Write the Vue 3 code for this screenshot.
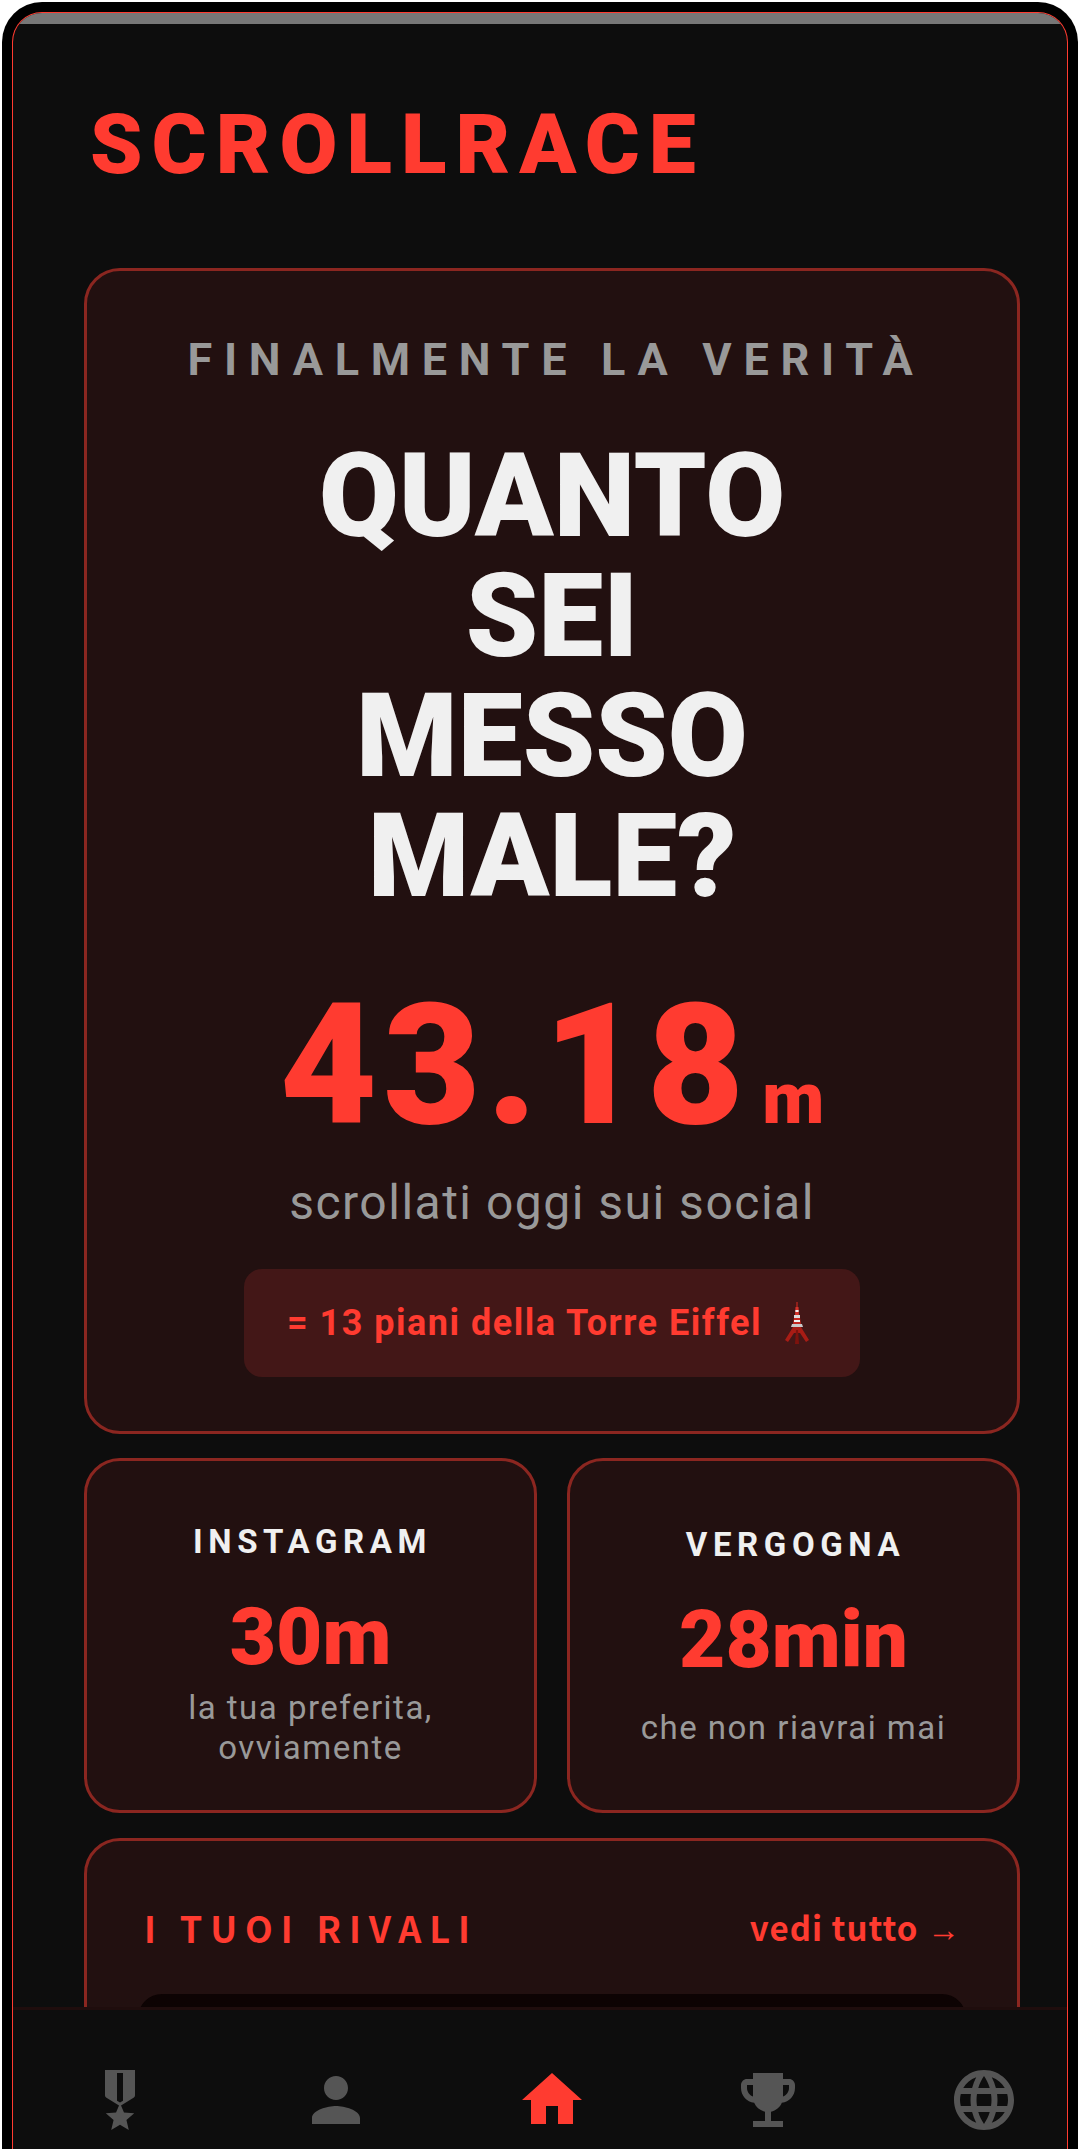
<template>
  <div class="device">
    <div class="screen">
      <div class="status-bar"></div>

      <div class="scroll-area">
        <h1 class="logo">SCROLLRACE</h1>

        <section class="card hero">
          <p class="hero-kicker">FINALMENTE LA VERITÀ</p>
          <h2 class="hero-title">QUANTO<br />SEI<br />MESSO<br />MALE?</h2>
          <div class="hero-value">43.18<span class="hero-unit">m</span></div>
          <p class="hero-sub">scrollati oggi sui social</p>
          <div class="hero-pill">
            <span>= 13 piani della Torre Eiffel</span>
            <svg class="tower" viewBox="0 0 24 42">
              <path fill="#a81c15" d="M8 25h8l8 13-3 2-6-9H9l-6 9-3-2z" />
              <path fill="#7d120d" d="M11 28h2l1 14h-4z" />
              <path fill="#c9c9c9" d="M7 22h10l1 3H6z" />
              <path fill="#c4271f" d="M9 16h6l1 6H8z" />
              <path fill="#f0f0f0" d="M9 18h6v2H9z" />
              <path fill="#dcdcdc" d="M9 13h6v3H9z" />
              <path fill="#d3322a" d="M10.5 5h3l.5 8h-4z" />
              <path fill="#f0f0f0" d="M10.4 8h3.2v2h-3.2z" />
              <path fill="#c4271f" d="M11.4 0h1.2v5h-1.2z" />
            </svg>
          </div>
        </section>

        <div class="stats">
          <section v-for="stat in stats" :key="stat.label" class="card stat">
            <p class="stat-label">{{ stat.label }}</p>
            <p class="stat-value">{{ stat.value }}</p>
            <p class="stat-note">{{ stat.note }}</p>
          </section>
        </div>

        <section class="card rivals">
          <div class="rivals-head">
            <span class="rivals-title">I TUOI RIVALI</span>
            <span class="rivals-link">vedi tutto <span class="arrow">→</span></span>
          </div>
          <div class="rivals-list"></div>
        </section>
      </div>

      <nav class="tabbar">
        <svg
          v-for="tab in tabs"
          :key="tab.name"
          class="tab-icon"
          :class="{ active: tab.active }"
          viewBox="0 0 24 24"
        >
          <path :d="tab.d" />
        </svg>
      </nav>
    </div>
  </div>
</template>

<script setup>
const stats = [
  { label: 'INSTAGRAM', value: '30m', note: 'la tua preferita, ovviamente' },
  { label: 'VERGOGNA', value: '28min', note: 'che non riavrai mai' }
]

const tabs = [
  {
    name: 'medal',
    d: 'M17 10.43V2H7v8.43c0 .35.18.68.49.86l4.18 2.51-.99 2.34-3.41.29 2.59 2.24L9.07 22 12 20.23 14.93 22l-.78-3.33 2.59-2.24-3.41-.29-.99-2.34 4.18-2.51c.3-.18.48-.5.48-.86zm-4 1.8l-1 .6-1-.6V3h2v9.23z'
  },
  {
    name: 'person',
    d: 'M12 12c2.21 0 4-1.79 4-4s-1.79-4-4-4-4 1.79-4 4 1.79 4 4 4zm0 2c-2.67 0-8 1.34-8 4v2h16v-2c0-2.66-5.33-4-8-4z'
  },
  {
    name: 'home',
    active: true,
    d: 'M10 20v-6h4v6h5v-8h3L12 3 2 12h3v8z'
  },
  {
    name: 'trophy',
    d: 'M19 5h-2V3H7v2H5c-1.1 0-2 .9-2 2v1c0 2.55 1.92 4.63 4.39 4.94.63 1.5 1.98 2.63 3.61 2.96V19H7v2h10v-2h-4v-3.1c1.63-.33 2.98-1.46 3.61-2.96C19.08 12.63 21 10.55 21 8V7c0-1.1-.9-2-2-2zM5 8V7h2v3.82C5.84 10.4 5 9.3 5 8zm14 0c0 1.3-.84 2.4-2 2.82V7h2v1z'
  },
  {
    name: 'globe',
    d: 'M11.99 2C6.47 2 2 6.48 2 12s4.47 10 9.99 10C17.52 22 22 17.52 22 12S17.52 2 11.99 2zm6.93 6h-2.95c-.32-1.25-.78-2.45-1.38-3.56 1.84.63 3.37 1.91 4.33 3.56zM12 4.04c.83 1.2 1.48 2.53 1.91 3.96h-3.82c.43-1.43 1.08-2.76 1.91-3.96zM4.26 14C4.1 13.36 4 12.69 4 12s.1-1.36.26-2h3.38c-.08.66-.14 1.32-.14 2 0 .68.06 1.34.14 2H4.26zm.82 2h2.95c.32 1.25.78 2.45 1.38 3.56-1.84-.63-3.37-1.9-4.33-3.56zm2.95-8H5.08c.96-1.66 2.49-2.93 4.33-3.56C8.81 5.55 8.35 6.75 8.03 8zM12 19.96c-.83-1.2-1.48-2.53-1.91-3.96h3.82c-.43 1.43-1.08 2.76-1.91 3.96zM14.34 14H9.66c-.09-.66-.16-1.32-.16-2 0-.68.07-1.35.16-2h4.68c.09.65.16 1.32.16 2 0 .68-.07 1.34-.16 2zm.25 5.56c.6-1.11 1.06-2.31 1.38-3.56h2.95c-.96 1.65-2.49 2.93-4.33 3.56zM16.36 14c.08-.66.14-1.32.14-2 0-.68-.06-1.34-.14-2h3.38c.16.64.26 1.31.26 2s-.1 1.36-.26 2h-3.38z'
  }
]
</script>

<style>
html,
body {
  margin: 0;
  background: #fff;
}
</style>

<style scoped>
.device {
  box-sizing: border-box;
  height: 2147px;
  margin: 2px 2px 0;
  padding: 10px 10px 0;
  background: #000;
  border-radius: 40px 40px 0 0;
  font-family: Roboto, sans-serif;
}

.screen {
  box-sizing: border-box;
  height: 100%;
  display: flex;
  flex-direction: column;
  overflow: hidden;
  background: #0d0d0d;
  border: 1px solid #ff3b30;
  border-bottom: none;
  border-radius: 30px 30px 0 0;
}

.status-bar {
  flex-shrink: 0;
  height: 11px;
  background: #777;
}

.scroll-area {
  flex: 1;
  min-height: 0;
  overflow: hidden;
  padding: 0 47px 0 71px;
}

.logo {
  margin: 73px 0 75px 6px;
  font-size: 84px;
  line-height: 96px;
  font-weight: 900;
  letter-spacing: 9px;
  color: #ff3b30;
}

.card {
  box-sizing: border-box;
  background: #221010;
  border: 3px solid #8b2620;
  border-radius: 36px;
}

.hero {
  display: flex;
  flex-direction: column;
  align-items: center;
  height: 1166px;
  padding-top: 65px;
}

.hero-kicker {
  margin: 0;
  padding-left: 8px;
  font-size: 45px;
  line-height: 48px;
  font-weight: 700;
  letter-spacing: 11.7px;
  color: #999;
}

.hero-title {
  margin: 52px 0 0;
  font-size: 116px;
  line-height: 120px;
  font-weight: 900;
  text-align: center;
  color: #f0f0f0;
}

.hero-value {
  margin-top: 90px;
  font-size: 168px;
  line-height: 120px;
  font-weight: 900;
  letter-spacing: 6px;
  color: #ff3b30;
}

.hero-unit {
  margin-left: 12px;
  font-size: 72px;
  letter-spacing: 0;
}

.hero-sub {
  margin: 14px 0 0;
  font-size: 48px;
  line-height: 60px;
  letter-spacing: 1.5px;
  color: #999;
}

.hero-pill {
  display: flex;
  align-items: center;
  gap: 23px;
  height: 108px;
  margin-top: 36px;
  padding: 0 51px 0 43px;
  background: #431717;
  border-radius: 18px;
  font-size: 36px;
  font-weight: 700;
  letter-spacing: 1.5px;
  color: #ff3b30;
}

.tower {
  width: 24px;
  height: 42px;
}

.stats {
  display: grid;
  grid-template-columns: 1fr 1fr;
  gap: 30px;
  margin-top: 24px;
}

.stat {
  display: flex;
  flex-direction: column;
  align-items: center;
  height: 355px;
  padding: 60px 36px 0;
  text-align: center;
}

.stat:nth-child(2) {
  padding-top: 63px;
}

.stat-label {
  margin: 0;
  padding-left: 4px;
  font-size: 33px;
  line-height: 42px;
  font-weight: 700;
  letter-spacing: 5.6px;
  color: #f0f0f0;
}

.stat-value {
  margin: 29px 0 0;
  font-size: 80px;
  line-height: 90px;
  font-weight: 900;
  color: #ff3b30;
}

.stat-note {
  margin: 6px 0 0;
  font-size: 33px;
  line-height: 40px;
  letter-spacing: 1.5px;
  color: #999;
}

.stat:nth-child(2) .stat-note {
  margin-top: 23px;
}

.rivals {
  margin-top: 25px;
  padding: 0 51px;
  height: 400px;
}

.rivals-head {
  box-sizing: border-box;
  display: flex;
  justify-content: space-between;
  align-items: center;
  height: 153px;
  padding: 18px 6px 0;
}

.rivals-title {
  font-family: 'Noto Sans CJK SC', sans-serif;
  font-size: 36px;
  font-weight: 700;
  letter-spacing: 7.9px;
  color: #ff3b30;
}

.rivals-link {
  font-family: 'Noto Sans CJK SC', sans-serif;
  font-size: 33px;
  font-weight: 700;
  letter-spacing: 1px;
  color: #ff3b30;
}

.arrow {
  font-family: 'Noto Sans', sans-serif;
  font-weight: 400;
  letter-spacing: 0;
}

.rivals-list {
  height: 200px;
  background: #0d0303;
  border-radius: 24px;
}

.tabbar {
  flex-shrink: 0;
  box-sizing: border-box;
  height: 142px;
  display: flex;
  justify-content: space-between;
  align-items: flex-start;
  padding: 54px 47px 0 71px;
  background: #0d0d0d;
  border-top: 3px solid #1f0d0d;
}

.tab-icon {
  width: 72px;
  height: 72px;
  fill: #555;
}

.tab-icon.active {
  fill: #ff3b30;
}
</style>
